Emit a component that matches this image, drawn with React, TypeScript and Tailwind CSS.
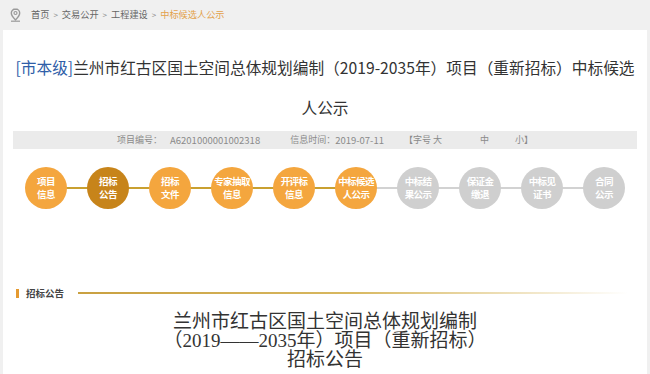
import React from "react";

const sans = { fontFamily: '"Microsoft YaHei", "Noto Sans CJK SC", "Liberation Sans", sans-serif' };

type Step = { l1: string; l2: string; kind: "done" | "active" | "todo" };

const steps: Step[] = [
  { l1: "项目", l2: "信息", kind: "done" },
  { l1: "招标", l2: "公告", kind: "active" },
  { l1: "招标", l2: "文件", kind: "done" },
  { l1: "专家抽取", l2: "信息", kind: "done" },
  { l1: "开评标", l2: "信息", kind: "done" },
  { l1: "中标候选", l2: "人公示", kind: "done" },
  { l1: "中标结", l2: "果公示", kind: "todo" },
  { l1: "保证金", l2: "缴退", kind: "todo" },
  { l1: "中标见", l2: "证书", kind: "todo" },
  { l1: "合同", l2: "公示", kind: "todo" },
];

function Pin() {
  return (
    <svg width="11" height="14" viewBox="0 0 11 14" fill="none">
      <path
        d="M5.5 1C3.1 1 1.3 2.8 1.3 5.1c0 2.9 4.2 6.8 4.2 6.8s4.2-3.9 4.2-6.8C9.7 2.8 7.9 1 5.5 1z"
        stroke="#9a9a9a"
        strokeWidth="1.4"
      />
      <circle cx="5.5" cy="5" r="1.5" stroke="#9a9a9a" strokeWidth="1.2" />
      <path d="M1 13.2h9" stroke="#9a9a9a" strokeWidth="1.2" />
    </svg>
  );
}

function Crumbs() {
  const sep = <span className="mx-[4px] text-[8px] text-[#888]">&gt;</span>;
  return (
    <div className="flex h-[30px] items-center bg-[#f0f0f0] pl-[10px] text-[9.2px] text-[#666]" style={sans}>
      <Pin />
      <span className="ml-[10px]">首页</span>
      {sep}
      <span>交易公开</span>
      {sep}
      <span>工程建设</span>
      {sep}
      <span className="text-[#e3a14a]">中标候选人公示</span>
    </div>
  );
}

function Steps() {
  return (
    <div className="relative mt-[18px] flex gap-[20px] pl-[22px]">
      <div className="absolute left-[46px] top-[20px] h-[2px] w-[311px] bg-[#c9a030]" />
      <div className="absolute left-[357px] top-[20px] h-[2px] w-[246px] bg-[#d2d2d2]" />
      {steps.map((s, i) => (
        <div
          key={i}
          className={
            "relative z-10 flex h-[42px] w-[42px] shrink-0 flex-col items-center justify-center rounded-full text-[9.5px] font-bold leading-[13px] tracking-[-0.6px] text-white " +
            (s.kind === "active" ? "bg-[#c7841a]" : s.kind === "done" ? "bg-[#f4a63e]" : "bg-[#cfcfcf]")
          }
          style={sans}
        >
          <span className="whitespace-nowrap">{s.l1}</span>
          <span className="whitespace-nowrap">{s.l2}</span>
        </div>
      ))}
    </div>
  );
}

export default function App() {
  return (
    <div className="h-[374px] w-[650px] overflow-hidden bg-[#f0f0f0]">
      <Crumbs />
      <div className="mx-[3px] h-[344px] bg-white">
        <h1
          className="pt-[18px] text-center text-[15.7px] font-normal leading-[40px] text-[#333]"
          style={sans}
        >
          <span className="text-[#2f5ea8]">[市本级]</span>兰州市红古区国土空间总体规划编制（2019-2035年）项目（重新招标）中标候选
          <br />
          人公示
        </h1>
        <div
          className="mx-[10px] mt-[3px] flex h-[18px] items-center bg-[#ebebeb] pl-[104px] text-[9px] text-[#8a8a8a]"
          style={sans}
        >
          <span>项目编号：</span>
          <span className="ml-[8px] text-[9.5px]">A6201000001002318</span>
          <span className="ml-[30px]">信息时间：</span>
          <span className="text-[9.5px]">2019-07-11</span>
          <span className="ml-[20px]">【字号 大</span>
          <span className="ml-[38px]">中</span>
          <span className="ml-[26px]">小】</span>
        </div>
        <Steps />
        <div className="mt-[77px] flex items-center pl-[13px]" style={sans}>
          <span className="h-[9px] w-[3px] bg-[#e59a30]" />
          <span className="ml-[7px] text-[9.5px] font-bold text-[#444]">招标公告</span>
          <span className="ml-[14px] h-[2px] w-[550px] bg-gradient-to-r from-[#c9a040] via-[#d8b860] to-transparent" />
        </div>
        <div
          className="mt-[12px] text-center text-[19px] leading-[19px] text-[#333]"
          style={{ fontFamily: '"Liberation Serif", "Noto Sans CJK SC", serif' }}
        >
          <div>兰州市红古区国土空间总体规划编制</div>
          <div>（2019——2035年）项目（重新招标）</div>
          <div>招标公告</div>
        </div>
      </div>
    </div>
  );
}
